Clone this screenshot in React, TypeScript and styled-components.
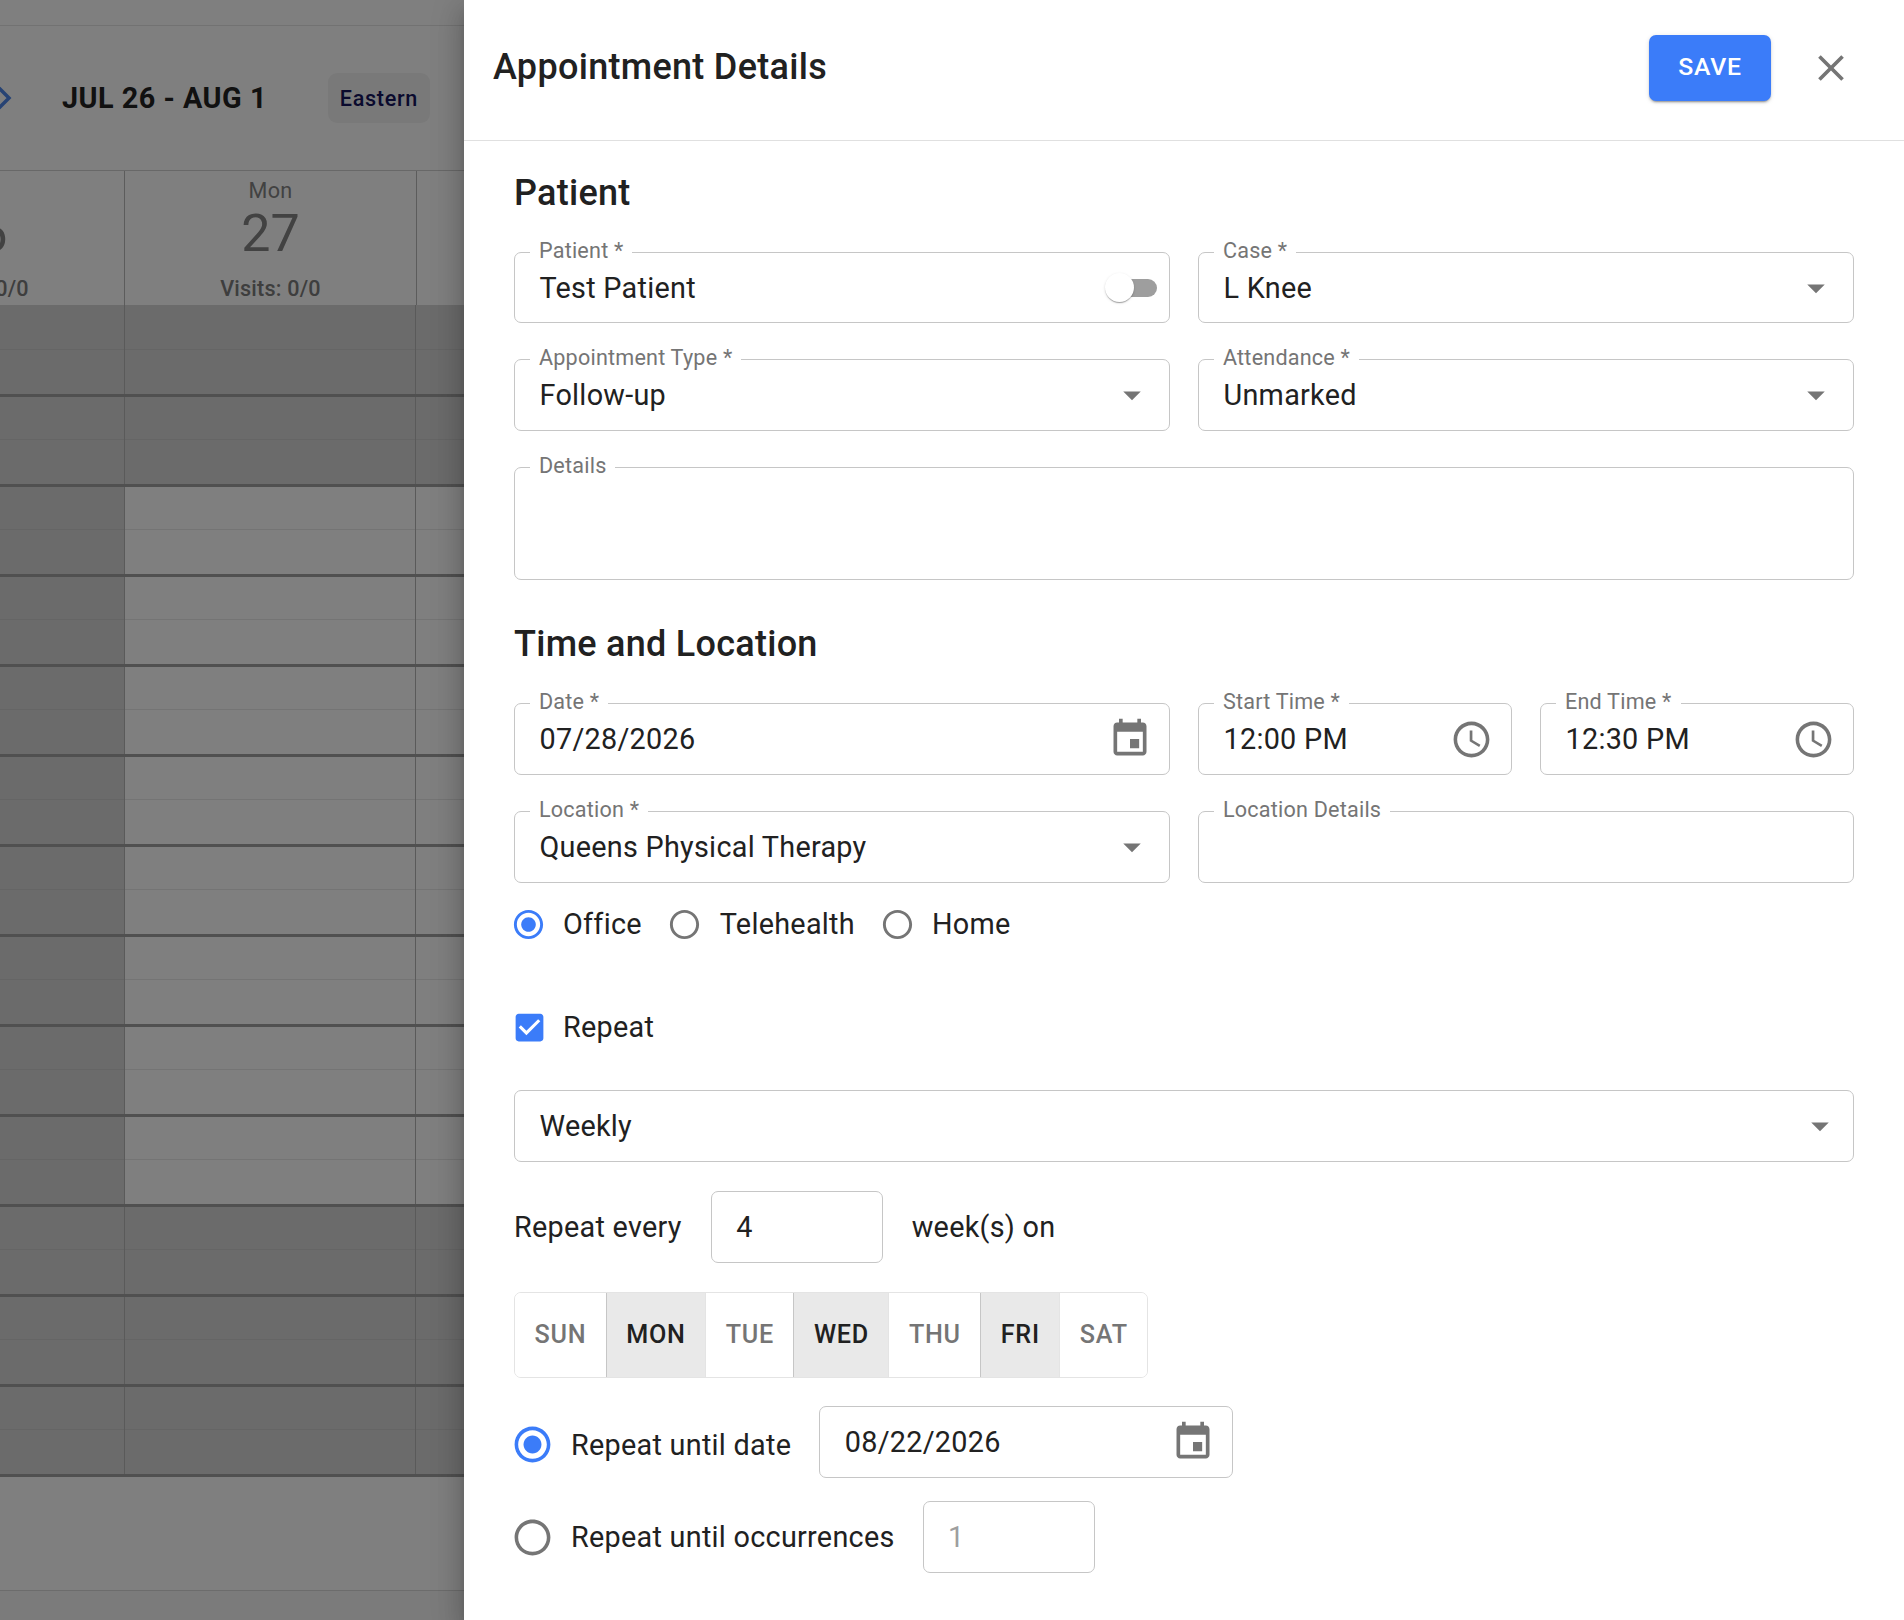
import React from 'react';
import styled, { createGlobalStyle } from 'styled-components';

const Global = createGlobalStyle`
  html, body { margin: 0; padding: 0; background: #fff; }
  body { font-family: Roboto, "Liberation Sans", sans-serif; color: #212121; }
  * { box-sizing: border-box; }
`;

const Page = styled.div`
  display: flex;
  width: 1904px;
  height: 1620px;
  overflow: hidden;
`;

/* ---------- calendar behind the backdrop ---------- */
const Calendar = styled.div`
  position: relative;
  flex: 0 0 464px;
  height: 1620px;
  overflow: hidden;
  background: #fff;
  display: flex;
  flex-direction: column;
`;
const Backdrop = styled.div`
  position: absolute;
  inset: 0;
  background: rgba(0, 0, 0, 0.5);
`;
const TopStrip = styled.div`
  flex: 0 0 26px;
  border-bottom: 1px solid #e4e4e4;
`;
const Toolbar = styled.div`
  flex: 0 0 144px;
  display: flex;
  align-items: center;
  margin-left: -10px;
`;
const Range = styled.div`
  margin-left: 48px;
  font-size: 28.8px;
  font-weight: 700;
  letter-spacing: 0.5px;
  color: #222;
  white-space: nowrap;
`;
const Chip = styled.div`
  margin-left: 61px;
  width: 102px;
  height: 50px;
  border-radius: 9px;
  background: #f3f3f3;
  display: flex;
  align-items: center;
  justify-content: center;
  font-size: 21.6px;
  font-weight: 500;
  letter-spacing: 0.7px;
  color: #14145c;
`;
const DayHeader = styled.div`
  flex: 0 0 135px;
  display: grid;
  grid-template-columns: 292px 292px 292px;
  margin-left: -167px;
  border-top: 1px solid #d0d0d0;
`;
const DayCell = styled.div`
  border-right: 1px solid #b8b8b8;
  display: flex;
  flex-direction: column;
  align-items: center;
  color: #848484;
  padding-top: 7px;
`;
const DayName = styled.div`
  font-size: 21.6px;
  letter-spacing: 0.3px;
  line-height: 26px;
`;
const DayNum = styled.div`
  font-size: 52px;
  line-height: 60px;
`;
const Visits = styled.div`
  margin-top: 12px;
  font-size: 21.6px;
  font-weight: 500;
  letter-spacing: 0.2px;
  line-height: 26px;
  color: #7c7c7c;
`;
const Hours = styled.div`
  display: flex;
  flex-direction: column;
  margin-left: -167px;
`;
const Hour = styled.div`
  height: 90px;
  display: grid;
  grid-template-columns: 292px 291px 292px;
  border-bottom: 3px solid #a0a0a0;
  &:first-child { height: 92px; }
`;
const Slot = styled.div<{ $off: boolean }>`
  border-right: 1px solid #b4b4b4;
  background: ${(p) => (p.$off
    ? 'linear-gradient(to top, #d6d6d6 44px, #cbcbcb 44px, #cbcbcb 45px, #d6d6d6 45px)'
    : 'linear-gradient(to top, #fff 44px, #e8e8e8 44px, #e8e8e8 45px, #fff 45px)')};
`;
const FooterGap = styled.div`
  flex: 0 0 114px;
  border-bottom: 1px solid #d8d8d8;
`;
const FooterRest = styled.div`
  flex: 1;
  background: #f6f6f6;
`;

/* ---------- drawer ---------- */
const Drawer = styled.div`
  position: relative;
  flex: 1;
  height: 1620px;
  background: #fff;
  box-shadow: 0 8px 10px -5px rgba(0, 0, 0, 0.2), 0 16px 24px 2px rgba(0, 0, 0, 0.14), 0 6px 30px 5px rgba(0, 0, 0, 0.12);
`;
const Header = styled.header`
  height: 141px;
  border-bottom: 1px solid #e0e0e0;
  display: flex;
  align-items: center;
  padding: 0 50px 6px 29px;
`;
const Title = styled.h1`
  flex: 1;
  margin: 0;
  font-size: 36px;
  font-weight: 500;
  letter-spacing: 0.3px;
  color: #212121;
`;
const SaveButton = styled.button`
  width: 122px;
  height: 66px;
  border: 0;
  border-radius: 7px;
  padding: 0 0 4px;
  background: #3b7cf9;
  color: #fff;
  font-family: inherit;
  font-size: 24.8px;
  font-weight: 500;
  letter-spacing: 0.7px;
  margin-top: 2px;
  box-shadow: 0 3px 1px -2px rgba(0, 0, 0, 0.2), 0 2px 2px 0 rgba(0, 0, 0, 0.14), 0 1px 5px 0 rgba(0, 0, 0, 0.12);
`;
const CloseIcon = styled.svg`
  width: 44px;
  height: 44px;
  fill: #757575;
  margin: 2px 1px 0 38px;
`;
const Body = styled.div`
  padding: 0 50px;
  display: flex;
  flex-direction: column;
`;
const Heading = styled.h2<{ $top: number }>`
  margin: ${(p) => p.$top}px 0 0;
  font-size: 36px;
  line-height: 44px;
  font-weight: 500;
  letter-spacing: 0.27px;
  color: #212121;
`;
const TwoCols = styled.div<{ $top: number }>`
  margin-top: ${(p) => p.$top}px;
  display: grid;
  grid-template-columns: 656px 656px;
  column-gap: 28px;
`;
const TimePair = styled.div`
  display: grid;
  grid-template-columns: 314px 314px;
  column-gap: 28px;
`;
const Field = styled.div<{ $w?: string; $h?: number }>`
  position: relative;
  width: ${(p) => p.$w ?? '100%'};
  flex: none;
  height: ${(p) => p.$h ?? 72}px;
  border: 1px solid #c6c6c6;
  border-radius: 7px;
  display: flex;
  align-items: center;
  padding: 0 0 0 24.5px;
`;
const Label = styled.label`
  position: absolute;
  top: -15px;
  left: 15px;
  padding: 0 9px;
  background: #fff;
  font-size: 21.6px;
  line-height: 26px;
  color: #757575;
  letter-spacing: 0.2px;
  white-space: nowrap;
`;
const Value = styled.span<{ $muted?: boolean }>`
  flex: 1;
  font-size: 28.8px;
  line-height: 34px;
  letter-spacing: 0.27px;
  color: ${(p) => (p.$muted ? '#9e9e9e' : '#212121')};
  white-space: nowrap;
`;
const AdornIcon = styled.svg<{ $r: number; $size: number; $lift?: number }>`
  flex: none;
  width: ${(p) => p.$size}px;
  height: ${(p) => p.$size}px;
  margin-right: ${(p) => p.$r}px;
  margin-bottom: ${(p) => p.$lift ?? 0}px;
  fill: #757575;
`;
const ToggleTrack = styled.div`
  position: relative;
  flex: none;
  width: 44px;
  height: 18px;
  margin-right: 12px;
  border-radius: 9px;
  background: #9e9e9e;
`;
const ToggleThumb = styled.div`
  position: absolute;
  left: -8px;
  top: -5.5px;
  width: 29px;
  height: 29px;
  border-radius: 50%;
  background: #fff;
  box-shadow: 0 2px 1px -1px rgba(0, 0, 0, 0.2), 0 1px 1px 0 rgba(0, 0, 0, 0.14), 0 1px 3px 0 rgba(0, 0, 0, 0.12);
`;
const Stack = styled.div<{ $top: number }>`
  margin-top: ${(p) => p.$top}px;
`;
const RadioRow = styled.div`
  margin-top: 23px;
  height: 36px;
  display: flex;
  align-items: center;
`;
const RadioItem = styled.div<{ $gap: number }>`
  display: flex;
  align-items: center;
  margin-right: ${(p) => p.$gap}px;
`;
const RadioSvg = styled.svg<{ $size: number; $on: boolean; $lm: number; $mr: number }>`
  flex: none;
  width: ${(p) => p.$size}px;
  height: ${(p) => p.$size}px;
  margin-left: ${(p) => p.$lm}px;
  margin-right: ${(p) => p.$mr}px;
  fill: ${(p) => (p.$on ? '#3b7cf9' : '#757575')};
`;
const Text = styled.span`
  font-size: 28.8px;
  line-height: 36px;
  letter-spacing: 0.27px;
  color: #212121;
  white-space: nowrap;
`;
const CheckRow = styled.div`
  margin-top: 67px;
  height: 36px;
  display: flex;
  align-items: center;
`;
const CheckSvg = styled.svg`
  flex: none;
  width: 37px;
  height: 37px;
  margin: 0 15px 0 -3px;
  fill: #3b7cf9;
`;
const RepeatEvery = styled.div`
  margin-top: 29px;
  display: flex;
  align-items: center;
  gap: 29px;
`;
const DayGroup = styled.div`
  margin-top: 29px;
  width: max-content;
  height: 86px;
  display: flex;
  border: 1px solid #e4e4e4;
  border-radius: 7px;
  overflow: hidden;
`;
const DayButton = styled.div<{ $on: boolean }>`
  height: 100%;
  padding: 0 19.5px 2px;
  display: flex;
  align-items: center;
  font-size: 25.2px;
  font-weight: 500;
  letter-spacing: 0.72px;
  color: ${(p) => (p.$on ? '#212121' : '#757575')};
  background: ${(p) => (p.$on ? '#e9e9e9' : '#fff')};
  border-left: 1px solid ${(p) => (p.$on ? '#c6c6c6' : '#e4e4e4')};
  &:first-child { border-left: 0; }
`;
const UntilRow = styled.div<{ $top: number }>`
  margin-top: ${(p) => p.$top}px;
  display: flex;
  align-items: center;
`;
const UntilLabel = styled.div<{ $dy: number }>`
  display: flex;
  align-items: center;
  margin-top: ${(p) => p.$dy}px;
  margin-right: 28px;
`;

/* ---------- icons ---------- */
const P = {
  close: 'M19 6.41 17.59 5 12 10.59 6.41 5 5 6.41 10.59 12 5 17.59 6.41 19 12 13.41 17.59 19 19 17.59 13.41 12z',
  arrow: 'M7 10l5 5 5-5z',
  event: 'M17 12h-5v5h5v-5zM16 1v2H8V1H6v2H5c-1.11 0-1.99.9-1.99 2L3 19c0 1.1.89 2 2 2h14c1.1 0 2-.9 2-2V5c0-1.1-.9-2-2-2h-1V1h-2zm3 18H5V8h14v11z',
  clock: 'M11.99 2C6.47 2 2 6.48 2 12s4.47 10 9.99 10C17.52 22 22 17.52 22 12S17.52 2 11.99 2zM12 20c-4.42 0-8-3.58-8-8s3.58-8 8-8 8 3.58 8 8-3.58 8-8 8zm.5-13H11v6l5.25 3.15.75-1.23-4.5-2.67z',
  radioOff: 'M12 2C6.48 2 2 6.48 2 12s4.48 10 10 10 10-4.48 10-10S17.52 2 12 2zm0 18c-4.42 0-8-3.58-8-8s3.58-8 8-8 8 3.58 8 8-3.58 8-8 8z',
  radioDot: 'M12 7c-2.76 0-5 2.24-5 5s2.24 5 5 5 5-2.24 5-5-2.24-5-5-5z',
  check: 'M19 3H5c-1.11 0-2 .9-2 2v14c0 1.1.89 2 2 2h14c1.11 0 2-.9 2-2V5c0-1.1-.89-2-2-2zm-9 14l-5-5 1.41-1.41L10 14.17l7.59-7.59L19 8l-9 9z',
};

const Arrow = ({ r = 0 }: { r?: number }) => (
  <AdornIcon $r={r} $size={42} viewBox="0 0 24 24"><path d={P.arrow} /></AdornIcon>
);
const EventIcon = () => (
  <AdornIcon $r={17} $size={44} $lift={1} viewBox="0 0 24 24"><path d={P.event} /></AdornIcon>
);
const ClockIcon = () => (
  <AdornIcon $r={18} $size={43} viewBox="0 0 24 24"><path d={P.clock} /></AdornIcon>
);
const Radio = ({ on, size, lm, mr }: { on: boolean; size: number; lm: number; mr: number }) => (
  <RadioSvg $on={on} $size={size} $lm={lm} $mr={mr} viewBox="0 0 24 24">
    <path d={P.radioOff} />
    {on && <path d={P.radioDot} />}
  </RadioSvg>
);

const Input = ({ label, value, children, w, h, muted }: {
  label?: string; value?: string; children?: React.ReactNode; w?: string; h?: number; muted?: boolean;
}) => (
  <Field $w={w} $h={h}>
    {label && <Label>{label}</Label>}
    <Value $muted={muted}>{value}</Value>
    {children}
  </Field>
);

const hourCount = 13;
const days = [
  { name: 'Sun', num: '26' },
  { name: 'Mon', num: '27' },
  { name: 'Tue', num: '28' },
];
const weekdays = [
  { d: 'SUN', on: false }, { d: 'MON', on: true }, { d: 'TUE', on: false }, { d: 'WED', on: true },
  { d: 'THU', on: false }, { d: 'FRI', on: true }, { d: 'SAT', on: false },
];

export default function App() {
  return (
    <Page>
      <Global />
      <Calendar>
        <TopStrip />
        <Toolbar>
          <svg width="24" height="30" viewBox="0 0 24 30" fill="none" stroke="#4f86e8" strokeWidth="3.5">
            <path d="M9 5l10 10-10 10" />
          </svg>
          <Range>JUL 26 - AUG 1</Range>
          <Chip>Eastern</Chip>
        </Toolbar>
        <DayHeader>
          {days.map((d) => (
            <DayCell key={d.name}>
              <DayName>{d.name}</DayName>
              <DayNum>{d.num}</DayNum>
              <Visits>Visits: 0/0</Visits>
            </DayCell>
          ))}
        </DayHeader>
        <Hours>
          {Array.from({ length: hourCount }).map((_, i) => {
            const open = i >= 2 && i <= 9;
            return (
              <Hour key={i}>
                <Slot $off />
                <Slot $off={!open} />
                <Slot $off={!open} />
              </Hour>
            );
          })}
        </Hours>
        <FooterGap />
        <FooterRest />
        <Backdrop />
      </Calendar>

      <Drawer>
        <Header>
          <Title>Appointment Details</Title>
          <SaveButton>SAVE</SaveButton>
          <CloseIcon viewBox="0 0 24 24"><path d={P.close} /></CloseIcon>
        </Header>
        <Body>
          <Heading $top={30}>Patient</Heading>
          <TwoCols $top={37}>
            <Input label="Patient *" value="Test Patient" h={71}>
              <ToggleTrack><ToggleThumb /></ToggleTrack>
            </Input>
            <Input label="Case *" value="L Knee" h={71}><Arrow r={16} /></Input>
          </TwoCols>
          <TwoCols $top={36}>
            <Input label="Appointment Type *" value="Follow-up"><Arrow r={16} /></Input>
            <Input label="Attendance *" value="Unmarked"><Arrow r={16} /></Input>
          </TwoCols>
          <Stack $top={36}>
            <Input label="Details" h={113} />
          </Stack>
          <Heading $top={42}>Time and Location</Heading>
          <TwoCols $top={37}>
            <Input label="Date *" value="07/28/2026"><EventIcon /></Input>
            <TimePair>
              <Input label="Start Time *" value="12:00 PM"><ClockIcon /></Input>
              <Input label="End Time *" value="12:30 PM"><ClockIcon /></Input>
            </TimePair>
          </TwoCols>
          <TwoCols $top={36}>
            <Input label="Location *" value="Queens Physical Therapy"><Arrow r={16} /></Input>
            <Input label="Location Details" />
          </TwoCols>
          <RadioRow>
            <RadioItem $gap={25}><Radio on size={35} lm={-3} mr={17} /><Text>Office</Text></RadioItem>
            <RadioItem $gap={25}><Radio on={false} size={35} lm={0} mr={18} /><Text>Telehealth</Text></RadioItem>
            <RadioItem $gap={0}><Radio on={false} size={35} lm={0} mr={17} /><Text>Home</Text></RadioItem>
          </RadioRow>
          <CheckRow>
            <CheckSvg viewBox="0 0 24 24"><path d={P.check} /></CheckSvg>
            <Text>Repeat</Text>
          </CheckRow>
          <Stack $top={45}>
            <Input value="Weekly"><Arrow r={12} /></Input>
          </Stack>
          <RepeatEvery>
            <Text>Repeat every</Text>
            <Input value="4" w="172px" />
            <Text>week(s) on</Text>
          </RepeatEvery>
          <DayGroup>
            {weekdays.map((x) => <DayButton key={x.d} $on={x.on}>{x.d}</DayButton>)}
          </DayGroup>
          <UntilRow $top={28}>
            <UntilLabel $dy={5}>
              <Radio on size={43} lm={-3} mr={17} />
              <Text>Repeat until date</Text>
            </UntilLabel>
            <Input value="08/22/2026" w="414px"><EventIcon /></Input>
          </UntilRow>
          <UntilRow $top={23}>
            <UntilLabel $dy={0}>
              <Radio on={false} size={43} lm={-3} mr={17} />
              <Text>Repeat until occurrences</Text>
            </UntilLabel>
            <Input value="1" w="172px" muted />
          </UntilRow>
        </Body>
      </Drawer>
    </Page>
  );
}
